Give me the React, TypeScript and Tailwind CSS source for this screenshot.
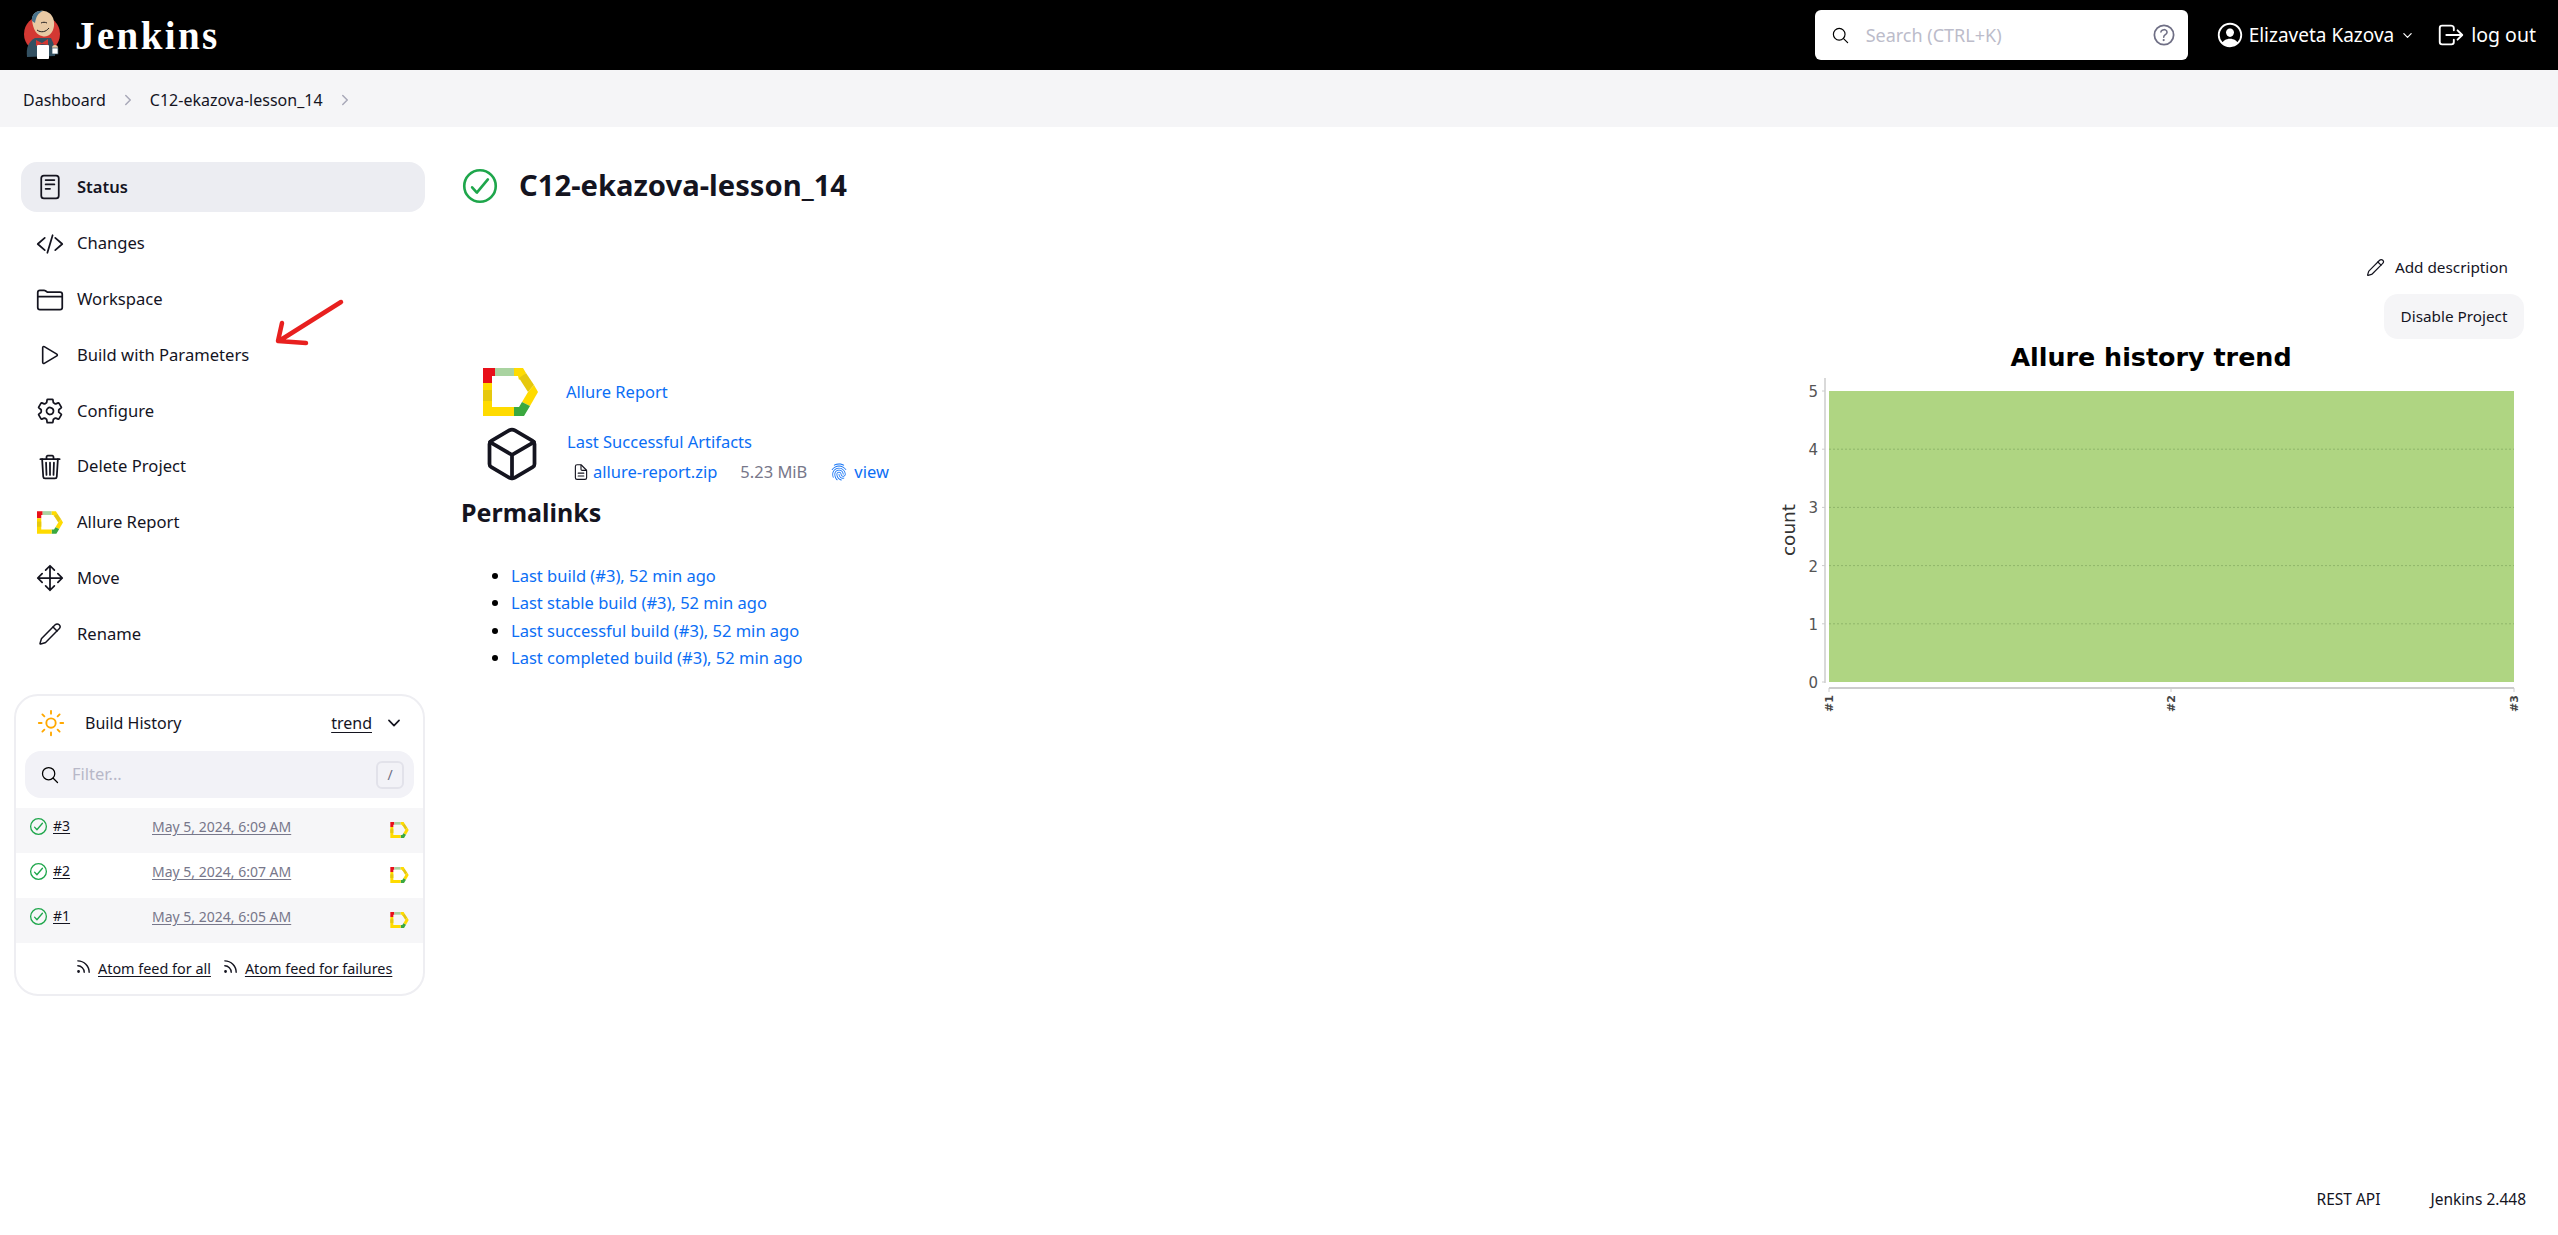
import {
  IoReaderOutline, IoCodeSlashOutline, IoFolderOutline, IoPlayOutline, IoSettingsOutline,
  IoTrashOutline, IoMoveOutline, IoCubeOutline, IoSearchOutline, IoHelpCircleOutline,
  IoPersonCircleOutline, IoChevronDown, IoLogOutOutline, IoSunnyOutline,
  IoFingerPrintOutline, IoCheckmarkCircleOutline, IoDocumentTextOutline, IoChevronForward,
} from "react-icons/io5";
import { Pencil, Rss } from "lucide-react";

const font = "font-['Noto_Sans','Open_Sans',sans-serif]";

function AllureLogo({ className }: { className: string }) {
  return (
    <svg viewBox="0 0 55 48" className={className}>
      <polygon points="0,0 12,0 12,8 9,8 9,15 0,15" fill="#e8101a" />
      <rect x="12" y="0" width="19" height="8" fill="#a9d3a0" />
      <polygon points="31,0 40,0 43,5 36,12 35,8 31,8" fill="#ffdb00" />
      <polygon points="43,5 51,17 45,24 36,10" fill="#e6c80e" />
      <polygon points="51,17 55,24 47,38 39,34 45,24" fill="#ffdb00" />
      <polygon points="39,34 47,38 41,48 31,48 31,39 36,39" fill="#3aa83f" />
      <polygon points="0,15 9,15 9,39 31,39 31,48 0,48" fill="#ffdb00" />
      <rect x="0" y="22" width="9" height="11" fill="#e6c80e" />
    </svg>
  );
}

function JenkinsLogo() {
  return (
    <svg viewBox="0 0 40 50" className="w-[40px] h-[50px]">
      <circle cx="19" cy="24" r="18" fill="#d33833" />
      <path d="M4 47 C3 38 5 32 12 28 L28 28 C31 34 33 40 32 46 Z" fill="#335061" />
      <path d="M9 10 C9 3 15 0 21 1 C28 2 32 8 31 16 C30 24 24 28 19 26 C14 25 10 20 9 10 Z" fill="#e8c9a4" />
      <path d="M9 11 C8 5 13 0 20 1 C15 3 13 7 12 13 Z" fill="#49728b" />
      <path d="M13 30 L19 33 L25 29 L25 35 L19 34 L13 36 Z" fill="#d33833" />
      <rect x="14" y="35" width="12" height="14" rx="1" fill="#fff" />
      <circle cx="32" cy="38" r="3" fill="#e8c9a4" />
      <rect x="29" y="38" width="6" height="6" fill="#fff" stroke="#335061" strokeWidth="0.7" />
      <path d="M18 13 C20 12 22 12 24 13 M14 20 C18 23 23 22 26 18" stroke="#231f20" strokeWidth="1" fill="none" />
    </svg>
  );
}

function Header() {
  return (
    <header className="h-[70px] bg-black flex items-center text-white">
      <div className="ml-[23px] shrink-0"><JenkinsLogo /></div>
      <span className="ml-[12px] font-['Liberation_Serif',serif] font-bold text-[39px] leading-none tracking-[2.4px]">Jenkins</span>
      <div className="ml-auto w-[373px] h-[50px] bg-white rounded-[6px] flex items-center pl-[16px] pr-[10px]">
        <IoSearchOutline className="w-[19px] h-[19px] text-black" />
        <span className="ml-[16px] text-[18px] text-[#bcbcca]">Search (CTRL+K)</span>
        <IoHelpCircleOutline className="ml-auto w-[28px] h-[28px] text-[#6f6f85]" />
      </div>
      <IoPersonCircleOutline className="ml-[27px] w-[30px] h-[30px]" />
      <span className="ml-[4px] text-[19px]">Elizaveta Kazova</span>
      <IoChevronDown className="ml-[7px] w-[13px] h-[13px]" />
      <IoLogOutOutline className="ml-[22px] w-[30px] h-[30px]" />
      <span className="ml-[5px] mr-[22px] text-[19.5px]">log out</span>
    </header>
  );
}

function Breadcrumb() {
  return (
    <nav className="h-[57px] bg-[#f5f5f7] flex items-center pl-[23px] pt-[2px] text-[16px] text-[#14141f]">
      <span>Dashboard</span>
      <IoChevronForward className="mx-[14px] w-[16px] h-[16px] text-[#a8a8b8]" />
      <span>C12-ekazova-lesson_14</span>
      <IoChevronForward className="mx-[14px] w-[16px] h-[16px] text-[#a8a8b8]" />
    </nav>
  );
}

const navItems = [
  { label: "Changes", icon: <IoCodeSlashOutline className="w-[28px] h-[28px]" /> },
  { label: "Workspace", icon: <IoFolderOutline className="w-[28px] h-[28px]" /> },
  { label: "Build with Parameters", icon: <IoPlayOutline className="w-[26px] h-[26px]" /> },
  { label: "Configure", icon: <IoSettingsOutline className="w-[28px] h-[28px]" /> },
  { label: "Delete Project", icon: <IoTrashOutline className="w-[28px] h-[28px]" /> },
  { label: "Allure Report", icon: <AllureLogo className="w-[26px] h-[23px]" /> },
  { label: "Move", icon: <IoMoveOutline className="w-[28px] h-[28px]" /> },
  { label: "Rename", icon: <Pencil className="w-[24px] h-[24px]" strokeWidth={1.5} /> },
];

const builds = [
  { id: "#3", date: "May 5, 2024, 6:09 AM", bg: "bg-[#f6f6f8]" },
  { id: "#2", date: "May 5, 2024, 6:07 AM", bg: "bg-white" },
  { id: "#1", date: "May 5, 2024, 6:05 AM", bg: "bg-[#f6f6f8]" },
];

function BuildHistory() {
  return (
    <section className="mt-[32px] w-[411px] h-[302px] border-2 border-[#eeeef2] rounded-[24px] flex flex-col">
      <div className="h-[53px] mb-[2px] flex items-center pl-[20px] shrink-0">
        <IoSunnyOutline className="w-[30px] h-[30px] text-[#ffa800]" />
        <span className="ml-[19px] text-[16px] text-[#14141f]">Build History</span>
        <span className="ml-auto text-[16px] text-[#14141f] underline underline-offset-[3px]">trend</span>
        <IoChevronDown className="ml-[13px] mr-[20px] w-[18px] h-[18px] text-[#14141f]" />
      </div>
      <div className="mx-[9px] h-[47px] rounded-[16px] bg-[#f2f2f7] flex items-center pl-[15px] pr-[10px] shrink-0">
        <IoSearchOutline className="w-[20px] h-[20px] text-black" />
        <span className="ml-[12px] text-[16.5px] text-[#b8b8c8]">Filter...</span>
        <span className="ml-auto w-[28px] h-[28px] rounded-[6px] border-2 border-[#e2e2ea] flex items-center justify-center text-[14px] text-[#6f6f85]">/</span>
      </div>
      <div className="mt-[10px] flex flex-col">
        {builds.map((b) => (
          <div key={b.id} className={`h-[45px] flex items-start ${b.bg}`}>
            <IoCheckmarkCircleOutline className="ml-[12px] mt-[8px] w-[21px] h-[21px] text-[#1ea64b] shrink-0" />
            <span className="ml-[4px] mt-[7px] w-[99px] text-[14px] text-[#14141f] underline underline-offset-2">{b.id}</span>
            <span className="mt-[8px] text-[14px] text-[#77778a] underline underline-offset-2">{b.date}</span>
            <AllureLogo className="ml-auto mr-[14px] mt-[14px] w-[19px] h-[16px]" />
          </div>
        ))}
      </div>
      <div className="mt-[15px] flex items-center pl-[59px] text-[14.4px] text-[#14141f]">
        <Rss className="w-[17px] h-[17px] -mt-[4px]" />
        <span className="ml-[6px] underline underline-offset-2">Atom feed for all</span>
        <Rss className="ml-[11px] w-[17px] h-[17px] -mt-[4px]" />
        <span className="ml-[6px] underline underline-offset-2">Atom feed for failures</span>
      </div>
    </section>
  );
}

function Sidebar() {
  return (
    <aside className="w-[425px] pl-[14px] shrink-0">
      <div className="ml-[7px] w-[404px]">
        <div className="h-[50px] rounded-[16px] bg-[#ecedf2] flex items-center pl-[15px] font-semibold text-[16.5px] text-[#14141f]">
          <span className="w-[28px] flex justify-center"><IoReaderOutline className="w-[28px] h-[28px]" /></span>
          <span className="ml-[13px]">Status</span>
        </div>
        <div className="mt-[4px] flex flex-col">
          {navItems.map((item) => (
            <div key={item.label} className="h-[55.75px] flex items-center pl-[15px] text-[16.6px] text-[#14141f]">
              <span className="w-[28px] flex justify-center text-[#14141f]">{item.icon}</span>
              <span className="ml-[13px]">{item.label}</span>
            </div>
          ))}
        </div>
      </div>
      <BuildHistory />
    </aside>
  );
}

function TrendChart() {
  const rows = [5, 4, 3, 2, 1, 0];
  return (
    <svg viewBox="-12 0 762 380" className="w-[762px] h-[380px] shrink-0 mt-[1px]">
      <text x="371" y="26" textAnchor="middle" fontFamily="DejaVu Sans" fontWeight="700" fontSize="25.4" fill="#000">Allure history trend</text>
      <rect x="49" y="51" width="685" height="291" fill="#afd582" />
      {[4, 3, 2, 1].map((n) => (
        <line key={n} x1="49" x2="734" y1={342 - n * 58.2} y2={342 - n * 58.2} stroke="#8fb56a" strokeDasharray="2 2" />
      ))}
      <line x1="45" x2="45" y1="38" y2="343" stroke="#ccc" strokeWidth="1.5" />
      <line x1="49" x2="734" y1="348" y2="348" stroke="#ccc" strokeWidth="2" />
      {rows.map((n) => (
        <g key={n}>
          <line x1="42" x2="45" y1={342 - n * 58.2} y2={342 - n * 58.2} stroke="#ccc" />
          <text x="38" y={348 - n * 58.2} textAnchor="end" fontFamily="DejaVu Sans" fontSize="15" fill="#555">{n}</text>
        </g>
      ))}
      <text transform="translate(15 190) rotate(-90)" textAnchor="middle" fontFamily="DejaVu Sans" fontSize="18.5" fill="#333">count</text>
      {[["#1", 49], ["#2", 391], ["#3", 734]].map(([t, x]) => (
        <g key={t}>
          <line x1={x} x2={x} y1="348" y2="352" stroke="#ccc" />
          <text transform={`translate(${Number(x) + 4} 372) rotate(-90)`} fontFamily="DejaVu Sans" fontWeight="700" fontSize="11" fill="#444">{t}</text>
        </g>
      ))}
    </svg>
  );
}

function Content() {
  const link = "text-[#0b6ef5]";
  return (
    <main className="flex-1 pl-[36px] min-w-0">
      <div className="h-[48px] flex items-center">
        <IoCheckmarkCircleOutline className="w-[42px] h-[42px] -ml-[2px] text-[#1ea64b]" />
        <h1 className="ml-[18px] text-[29.2px] font-bold text-[#14141f]">C12-ekazova-lesson_14</h1>
      </div>
      <div className="mt-[39px] pr-[34px] flex flex-col items-end">
        <div className="h-[36px] flex items-center pr-[16px] text-[15.3px] text-[#14141f]">
          <Pencil className="w-[19px] h-[19px]" strokeWidth={1.5} />
          <span className="ml-[10px]">Add description</span>
        </div>
        <div className="mt-[9px] h-[45px] w-[140px] rounded-[14px] bg-[#f5f5f7] flex items-center justify-center text-[15.3px] text-[#14141f]">Disable Project</div>
      </div>
      <div className="flex justify-between pr-[28px]">
        <div className="pt-[29px]">
          <div className="flex items-center h-[48px] pl-[22px]">
            <AllureLogo className="w-[55px] h-[48px]" />
            <span className={`ml-[28px] text-[16.5px] mt-[1px] ${link}`}>Allure Report</span>
          </div>
          <div className="flex mt-[8px] pl-[22px]">
            <IoCubeOutline className="w-[60px] h-[60px] -ml-[1px] text-[#14141f]" />
            <div className="ml-[25px] mt-[6px]">
              <div className={`text-[16.5px] ${link}`}>Last Successful Artifacts</div>
              <div className="mt-[5px] ml-[5px] flex items-center text-[16.5px]">
                <IoDocumentTextOutline className="w-[18px] h-[18px] text-[#14141f]" />
                <span className={`ml-[3px] ${link}`}>allure-report.zip</span>
                <span className="ml-[23px] text-[#77778a]">5.23 MiB</span>
                <IoFingerPrintOutline className="ml-[23px] w-[18px] h-[18px] text-[#0b6ef5]" />
                <span className={`ml-[6px] ${link}`}>view</span>
              </div>
            </div>
          </div>
          <h2 className="mt-[9px] text-[25px] font-bold text-[#14141f]">Permalinks</h2>
          <ul className="mt-[31px] ml-[50px] list-disc text-[16.5px] leading-[27.4px] marker:text-black">
            {["Last build (#3), 52 min ago", "Last stable build (#3), 52 min ago", "Last successful build (#3), 52 min ago", "Last completed build (#3), 52 min ago"].map((t) => (
              <li key={t}><span className={link}>{t}</span></li>
            ))}
          </ul>
        </div>
        <TrendChart />
      </div>
    </main>
  );
}

export default function App() {
  return (
    <div className={`relative min-h-screen flex flex-col bg-white ${font}`}>
      <Header />
      <Breadcrumb />
      <div className="flex pt-[35px] flex-1">
        <Sidebar />
        <Content />
      </div>
      <footer className="h-[47px] flex items-start justify-end pr-[32px] text-[15.5px] text-[#14141f]">
        <span>REST API</span>
        <span className="ml-[50px]">Jenkins 2.448</span>
      </footer>
      {/* hand drawn annotation over the page */}
      <svg className="absolute left-[270px] top-[296px] w-[80px] h-[54px]" viewBox="0 0 80 54" fill="none">
        <path d="M71 6 L9 45 M12 27 L8 45 L36 47" stroke="#e8201f" strokeWidth="4.5" strokeLinecap="round" strokeLinejoin="round" />
      </svg>
    </div>
  );
}
